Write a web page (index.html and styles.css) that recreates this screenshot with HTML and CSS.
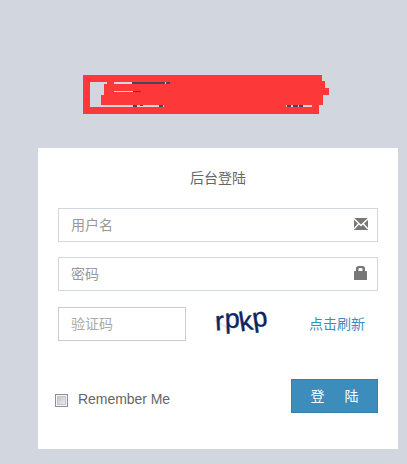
FILE: index.html
```
<!DOCTYPE html>
<html lang="zh-CN">
<head>
    <meta charset="UTF-8">
    <meta name="viewport" content="width=device-width, initial-scale=1.0">
    <title>后台登陆</title>
    <link rel="stylesheet" href="styles.css">
</head>
<body class="login-page">
    <div class="login-box">
        <!-- logo -->
        <div class="login-logo">
            <svg width="246" height="39" viewBox="0 0 246 39" shape-rendering="crispEdges">
                <path fill="#fc3838" d="M0 0H239V6H242V13H246V20H240V30H236V39H0Z"/>
                <path fill="#d2d6de" d="M7 7H24V9H21V20H18V30H81V32H7ZM31 7H87V9H31ZM31 16H58V17H31ZM203 30H229V32H203Z"/>
                <path fill="#444a55" d="M49 7H82V9H49ZM83 7H87V9H83ZM50 16H58V17H50ZM50 30H54V32H50ZM57 30H60V31H57ZM76 30H80V32H76ZM204 30H208V32H204ZM210 30H215V32H210ZM216 30H220V32H216Z"/>
            </svg>
        </div>
        <div class="login-box-body">
            <p class="login-box-msg">后台登陆</p>
            <form>
                <div class="form-group">
                    <input type="text" class="form-control" placeholder="用户名">
                    <svg class="feedback" width="14" height="12" viewBox="0 0 14 12">
                        <path fill="#777" d="M0 0H14V12H0Z"/>
                        <path fill="none" stroke="#fff" stroke-width="1.5" d="M-.5 .3L7 7.500L14.500 .3M0 11L5 5.600M14 11L9 5.600"/>
                    </svg>
                </div>
                <div class="form-group">
                    <input type="password" class="form-control" placeholder="密码">
                    <svg class="feedback lock" width="13" height="14" viewBox="0 0 13 14">
                        <path fill="#777" fill-rule="evenodd" d="M0 5.500Q0 5 .5 5H2V2.500Q2 0 4.500 0H8.500Q11 0 11 2.500V5H12.500Q13 5 13 5.500V13.500Q13 14 12.500 14H.5Q0 14 0 13.500ZM4.500 5H8.500V3Q8.500 2 7.500 2H5.500Q4.500 2 4.500 3Z"/>
                    </svg>
                </div>
                <div class="captcha-row">
                    <input type="text" class="form-control captcha-input" placeholder="验证码">
                    <svg class="captcha" width="90" height="34" viewBox="0 0 90 34">
                        <path stroke="#d5f5e5" stroke-width="2" d="M15 13L32 24"/>
                        <text class="captcha-text" transform="translate(15.500 23.500) rotate(-3)">r</text>
                        <text class="captcha-text" transform="translate(25 21) rotate(-2)">p</text>
                        <text class="captcha-text" transform="translate(40.500 24.500) rotate(-9)">k</text>
                        <text class="captcha-text" transform="translate(53.500 20.500) rotate(-8)">p</text>
                    </svg>
                    <a class="refresh" href="#">点击刷新</a>
                </div>
                <div class="submit-row">
                    <label class="remember"><span class="check"></span>Remember Me</label>
                    <button type="button" class="btn"><span>登</span><span>陆</span></button>
                </div>
            </form>
        </div>
    </div>
</body>
</html>
```
FILE: styles.css
```
* {
    box-sizing: border-box;
}

body {
    margin: 0;
    font-family: "Liberation Sans", "Noto Sans CJK SC", sans-serif;
    font-size: 14px;
    line-height: 20px;
    color: #666;
}

.login-page {
    height: 464px;
    overflow: hidden;
    background: #d2d6de;
}

.login-box {
    width: 360px;
    margin: 75px 0 0 38px;
}

.login-logo {
    height: 73px;
    padding-left: 45px;
}

.login-logo svg {
    display: block;
}

.login-box-body {
    height: 301px;
    padding: 20px;
    background: #fff;
}

.login-box-msg {
    margin: 0 0 20px;
    text-align: center;
}

.form-group {
    position: relative;
    margin-bottom: 15px;
}

.form-control {
    display: block;
    width: 100%;
    height: 34px;
    padding: 6px 12px;
    border: 1px solid #d2d6de;
    border-radius: 0;
    background: #fff;
    font: inherit;
}

.form-control::placeholder {
    color: #999;
    opacity: 1;
}

/* icon inside the right end of the input */
.feedback {
    position: absolute;
    top: 10px;
    right: 10px;
}

.feedback.lock {
    top: 9px;
    right: 11px;
}

.captcha-row {
    display: flex;
    align-items: center;
    padding-top: 1px;
}

.captcha-input {
    width: 128px;
    border-color: #ccc;
}

.captcha-input::placeholder {
    color: #aaa;
}

.captcha {
    margin-left: 14px;
    overflow: visible;
}

.captcha-text {
    font-family: "Liberation Sans", sans-serif;
    font-size: 27px;
    fill: #0b2560;
    stroke: #0b2560;
    stroke-width: 0.4px;
}

.refresh {
    margin-left: 19px;
    color: #3c8dbc;
    text-decoration: none;
}

.submit-row {
    display: flex;
    justify-content: space-between;
    align-items: flex-start;
    margin: 38px 0 0 -3px;
}

.remember {
    display: flex;
    align-items: center;
    margin-top: 10px;
    letter-spacing: -0.05px;
}

.check {
    width: 13px;
    height: 13px;
    margin: 2px 10px 0 0;
    border: 1px solid #8e8f8f;
    background: linear-gradient(135deg, #b8bcc5, #f4f4f5);
    box-shadow: inset 0 0 0 1px #f4f4f4, inset 0 0 0 2px #c3c7cd;
}

.btn {
    display: flex;
    justify-content: center;
    gap: 20px;
    width: 87px;
    height: 34px;
    padding: 6px 12px;
    border: 1px solid #367fa9;
    background: #3c8dbc;
    color: #fff;
    font: inherit;
}
```
